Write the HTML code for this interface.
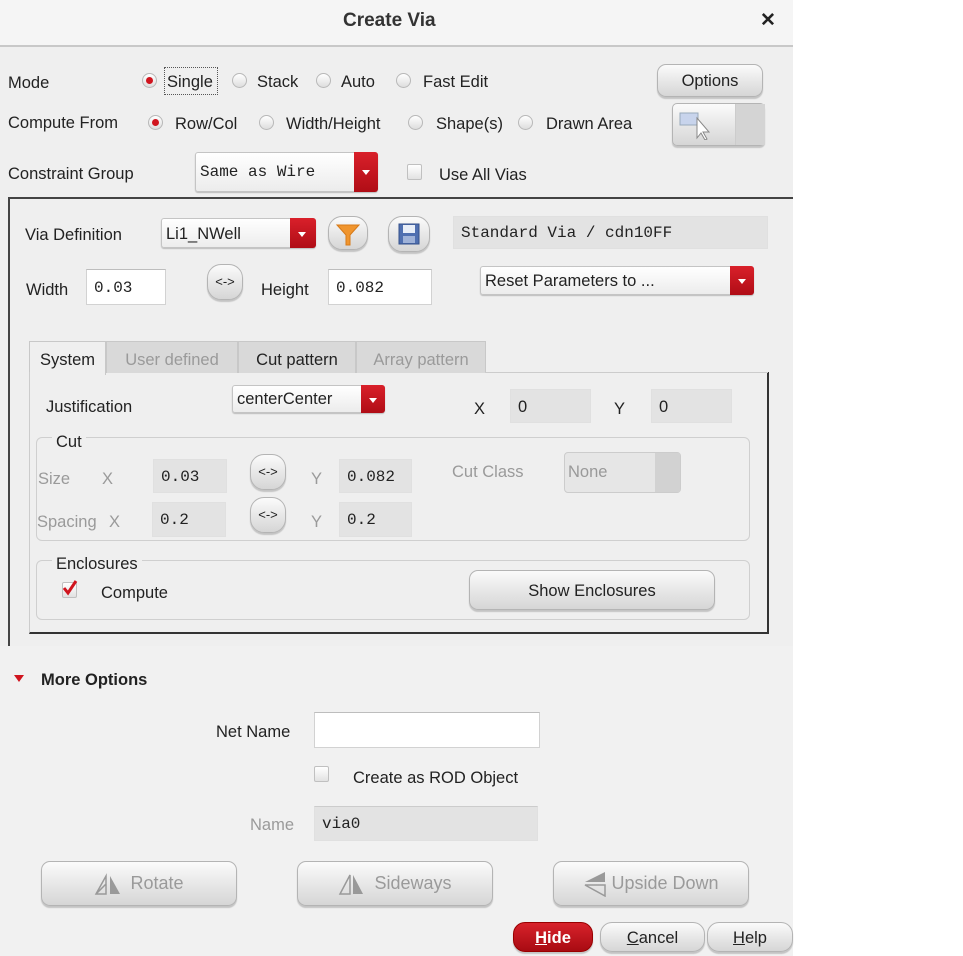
<!DOCTYPE html>
<html><head><meta charset="utf-8"><style>
*{box-sizing:border-box;margin:0;padding:0}
body{width:963px;height:956px;background:#fff;position:relative;overflow:hidden;font-family:"Liberation Sans",sans-serif;font-size:16.5px;color:#222}
#dlg{position:absolute;left:0;top:0;width:793px;height:956px;background:#efefef}
.a{position:absolute;white-space:nowrap}
.t{position:absolute;white-space:nowrap;line-height:20px}
.g{color:#9a9a9a}
.mono{font-family:"Liberation Mono",monospace}
.rad{position:absolute;width:15px;height:15px;border-radius:50%;background:linear-gradient(#fff,#ddd);border:1px solid #b8b8b8}
.rad.on::after{content:"";position:absolute;left:3px;top:3px;width:7px;height:7px;border-radius:50%;background:#d0141e}
.btn{position:absolute;border:1px solid #b4b4b4;border-radius:9px;background:linear-gradient(#fbfbfb,#e4e4e4 60%,#d6d6d6);box-shadow:0 2px 1px #c4c4c4;text-align:center}
.fld{position:absolute;background:#fff;border:1px solid #d2d2d2;border-top-color:#bdbdbd;padding-left:7px}
.fld.d{background:#e3e3e3;border-color:#e0e0e0}
.cmb{position:absolute;background:linear-gradient(#fff,#ececec);border:1px solid #c4c4c4;border-radius:3px;padding-left:4px;box-shadow:0 1px 1px #bbb}
.cmb .ar{position:absolute;right:-1px;top:-1px;bottom:-1px;width:24px;background:linear-gradient(#d9202a,#b00d16);border-radius:0 3px 3px 0}
.cmb .ar::after{content:"";position:absolute;left:8px;top:45%;border:4px solid transparent;border-top:5px solid #fff;border-bottom:0}
.chk{position:absolute;width:15px;height:16px;border:1px solid #c0c0c0;background:linear-gradient(#fff,#e2e2e2);border-radius:2px}
.grp{position:absolute;border:1px solid #cfcfcf;border-radius:6px}
.tab{position:absolute;top:341px;height:32px;border:1px solid #c8c8c8;border-bottom:none;background:#d9d9d9;text-align:center;line-height:36px}
.bi{display:inline-block;vertical-align:middle;margin-right:8px}
</style></head><body>
<div id="dlg">
<div class="a" style="left:0;top:0;width:793px;height:47px;background:#f5f5f5;border-bottom:2px solid #c8c8c8"></div>
<div class="t" style="left:343px;top:11px;font-size:19px;font-weight:bold;color:#333">Create Via</div>
<div class="t" style="left:760px;top:11px;font-size:19px;font-weight:bold">✕</div>

<div class="t" style="left:8px;top:73px">Mode</div>
<div class="rad on" style="left:142px;top:73px"></div>
<div class="a" style="left:164px;top:67px;width:54px;height:28px;border:1px dotted #555"></div>
<div class="t" style="left:167px;top:72px">Single</div>
<div class="rad" style="left:232px;top:73px"></div><div class="t" style="left:257px;top:72px">Stack</div>
<div class="rad" style="left:316px;top:73px"></div><div class="t" style="left:341px;top:72px">Auto</div>
<div class="rad" style="left:396px;top:73px"></div><div class="t" style="left:423px;top:72px">Fast Edit</div>
<div class="btn" style="left:657px;top:64px;width:106px;height:33px;line-height:33px">Options</div>

<div class="t" style="left:8px;top:113px">Compute From</div>
<div class="rad on" style="left:148px;top:115px"></div><div class="t" style="left:175px;top:114px">Row/Col</div>
<div class="rad" style="left:259px;top:115px"></div><div class="t" style="left:286px;top:114px">Width/Height</div>
<div class="rad" style="left:408px;top:115px"></div><div class="t" style="left:436px;top:114px">Shape(s)</div>
<div class="rad" style="left:518px;top:115px"></div><div class="t" style="left:546px;top:114px">Drawn Area</div>
<div class="btn" style="left:672px;top:103px;width:93px;height:43px;border-radius:5px">
<div class="a" style="left:62px;top:0;width:30px;height:41px;background:#d4d4d4;border-left:1px solid #ccc"></div>
<svg class="a" style="left:6px;top:6px" width="40" height="30"><rect x="1" y="3" width="18" height="12" fill="#c8d4ec" stroke="#9ab"/><path d="M18 8 L18 28 L22 23 L26 30 L28 29 L24 22 L30 22 Z" fill="#fff" stroke="#888"/></svg></div>

<div class="t" style="left:8px;top:164px">Constraint Group</div>
<div class="cmb mono" style="left:195px;top:152px;width:183px;height:40px;line-height:38px;font-size:16px">Same as Wire<div class="ar"></div></div>
<div class="chk" style="left:407px;top:164px"></div>
<div class="t" style="left:439px;top:165px">Use All Vias</div>

<div class="a" style="left:8px;top:197px;width:785px;height:449px;border-left:2px solid #444;border-top:2px solid #444"></div>
<div class="t" style="left:25px;top:225px">Via Definition</div>
<div class="cmb" style="left:161px;top:218px;width:155px;height:30px;line-height:30px">Li1_NWell<div class="ar" style="width:26px"></div></div>
<div class="btn" style="left:328px;top:216px;width:40px;height:34px;border-radius:14px"><svg width="38" height="32"><path d="M8 8 H30 L21 18 V28 H17 V18 Z" fill="#f0952e" stroke="#d77a18"/></svg></div>
<div class="btn" style="left:388px;top:216px;width:42px;height:36px;border-radius:14px"><svg width="40" height="34"><rect x="10" y="7" width="20" height="20" fill="#4f6fb0" stroke="#34508a"/><rect x="14" y="8" width="12" height="8" fill="#e8eef8"/><rect x="14" y="19" width="12" height="7" fill="#9fb2d8"/></svg></div>
<div class="fld d mono" style="left:453px;top:216px;width:315px;height:33px;line-height:33px;font-size:16px">Standard Via / cdn10FF</div>

<div class="t" style="left:26px;top:280px">Width</div>
<div class="fld mono" style="left:86px;top:269px;width:80px;height:36px;line-height:36px;font-size:16px">0.03</div>
<div class="btn" style="left:207px;top:264px;width:36px;height:36px;border-radius:14px;line-height:34px;font-size:13px">&lt;-&gt;</div>
<div class="t" style="left:261px;top:280px">Height</div>
<div class="fld mono" style="left:328px;top:269px;width:104px;height:36px;line-height:36px;font-size:16px">0.082</div>
<div class="cmb" style="left:480px;top:266px;width:274px;height:29px;line-height:29px">Reset Parameters to ...<div class="ar"></div></div>

<div class="tab" style="left:29px;width:77px;background:#efefef;height:34px">System</div>
<div class="tab g" style="left:106px;width:132px">User defined</div>
<div class="tab" style="left:238px;width:118px">Cut pattern</div>
<div class="tab g" style="left:356px;width:130px">Array pattern</div>
<div class="a" style="left:29px;top:372px;width:740px;height:262px;border-right:2px solid #333;border-bottom:2px solid #333;border-left:1px solid #ccc"></div>
<div class="a" style="left:485px;top:372px;width:283px;border-top:1px solid #ccc"></div>

<div class="t" style="left:46px;top:397px">Justification</div>
<div class="cmb" style="left:232px;top:385px;width:153px;height:28px;line-height:26px">centerCenter<div class="ar"></div></div>
<div class="t" style="left:474px;top:399px">X</div>
<div class="fld d" style="left:510px;top:389px;width:81px;height:34px;line-height:34px">0</div>
<div class="t" style="left:614px;top:399px">Y</div>
<div class="fld d" style="left:651px;top:389px;width:81px;height:34px;line-height:34px">0</div>

<div class="grp" style="left:36px;top:437px;width:714px;height:104px"></div>
<div class="t" style="left:52px;top:432px;background:#efefef;padding:0 4px">Cut</div>
<div class="t g" style="left:38px;top:469px">Size</div><div class="t g" style="left:102px;top:469px">X</div>
<div class="fld d mono" style="left:153px;top:459px;width:74px;height:34px;line-height:34px;font-size:16px">0.03</div>
<div class="btn" style="left:250px;top:454px;width:36px;height:36px;border-radius:14px;line-height:34px;font-size:13px">&lt;-&gt;</div>
<div class="t g" style="left:311px;top:469px">Y</div>
<div class="fld d mono" style="left:339px;top:459px;width:73px;height:34px;line-height:34px;font-size:16px">0.082</div>
<div class="t g" style="left:452px;top:462px">Cut Class</div>
<div class="a" style="left:564px;top:452px;width:117px;height:41px;border:1px solid #ccc;border-radius:4px;background:#e6e6e6;color:#999;padding-left:3px;line-height:38px">None<div class="a" style="right:0;top:0;width:25px;height:39px;background:#d2d2d2"></div></div>
<div class="t g" style="left:37px;top:512px">Spacing</div><div class="t g" style="left:109px;top:512px">X</div>
<div class="fld d mono" style="left:152px;top:502px;width:74px;height:35px;line-height:35px;font-size:16px">0.2</div>
<div class="btn" style="left:250px;top:497px;width:36px;height:36px;border-radius:14px;line-height:34px;font-size:13px">&lt;-&gt;</div>
<div class="t g" style="left:311px;top:512px">Y</div>
<div class="fld d mono" style="left:339px;top:502px;width:73px;height:35px;line-height:35px;font-size:16px">0.2</div>

<div class="grp" style="left:36px;top:560px;width:714px;height:60px"></div>
<div class="t" style="left:52px;top:554px;background:#efefef;padding:0 4px">Enclosures</div>
<div class="chk" style="left:62px;top:582px;width:15px"></div>
<svg class="a" style="left:62px;top:580px" width="16" height="16"><path d="M2 8 L6 13 L14 1" fill="none" stroke="#d0141e" stroke-width="3"/></svg>
<div class="t" style="left:101px;top:583px">Compute</div>
<div class="btn" style="left:469px;top:570px;width:246px;height:40px;line-height:40px">Show Enclosures</div>

<div class="a" style="left:0;top:646px;width:793px;height:310px;background:#f1f1f1"></div>
<div class="a" style="left:14px;top:675px;border:5px solid transparent;border-top:7px solid #d0141e;border-bottom:0"></div>
<div class="t" style="left:41px;top:670px;font-weight:bold">More Options</div>
<div class="t" style="left:216px;top:722px">Net Name</div>
<div class="fld" style="left:314px;top:712px;width:226px;height:36px"></div>
<div class="chk" style="left:314px;top:766px"></div>
<div class="t" style="left:353px;top:768px">Create as ROD Object</div>
<div class="t g" style="left:250px;top:815px">Name</div>
<div class="fld d mono" style="left:314px;top:806px;width:224px;height:35px;line-height:34px;font-size:16px;border-top-color:#ccc">via0</div>

<div class="btn g" style="left:41px;top:861px;width:196px;height:45px;line-height:43px;font-size:18px"><svg class="bi" width="28" height="24"><path d="M2 22 H12 V4 Z M2 22 L12 12" fill="none" stroke="#999" stroke-width="1.5"/><path d="M16 4 L26 22 H16 Z" fill="#999"/></svg>Rotate</div>
<div class="btn g" style="left:297px;top:861px;width:196px;height:45px;line-height:43px;font-size:18px"><svg class="bi" width="28" height="24"><path d="M12 3 V22 H2 Z" fill="none" stroke="#999" stroke-width="1.5"/><path d="M15 3 L25 22 H15 Z" fill="#999"/></svg>Sideways</div>
<div class="btn g" style="left:553px;top:861px;width:196px;height:45px;line-height:43px;font-size:18px"><svg class="bi" width="26" height="26" style="margin-right:2px"><path d="M22 1 V11 H2 Z" fill="#999"/><path d="M2 14 H22 V25 Z" fill="none" stroke="#999" stroke-width="1.5"/></svg>Upside Down</div>

<div class="btn" style="left:513px;top:922px;width:80px;height:30px;line-height:30px;background:linear-gradient(#d8222b,#a80b12);color:#fff;font-weight:bold;border-color:#900;border-radius:12px"><u>H</u>ide</div>
<div class="btn" style="left:600px;top:922px;width:105px;height:30px;line-height:30px;border-radius:12px"><u>C</u>ancel</div>
<div class="btn" style="left:707px;top:922px;width:86px;height:30px;line-height:30px;border-radius:12px"><u>H</u>elp</div>
</div>
</body></html>
